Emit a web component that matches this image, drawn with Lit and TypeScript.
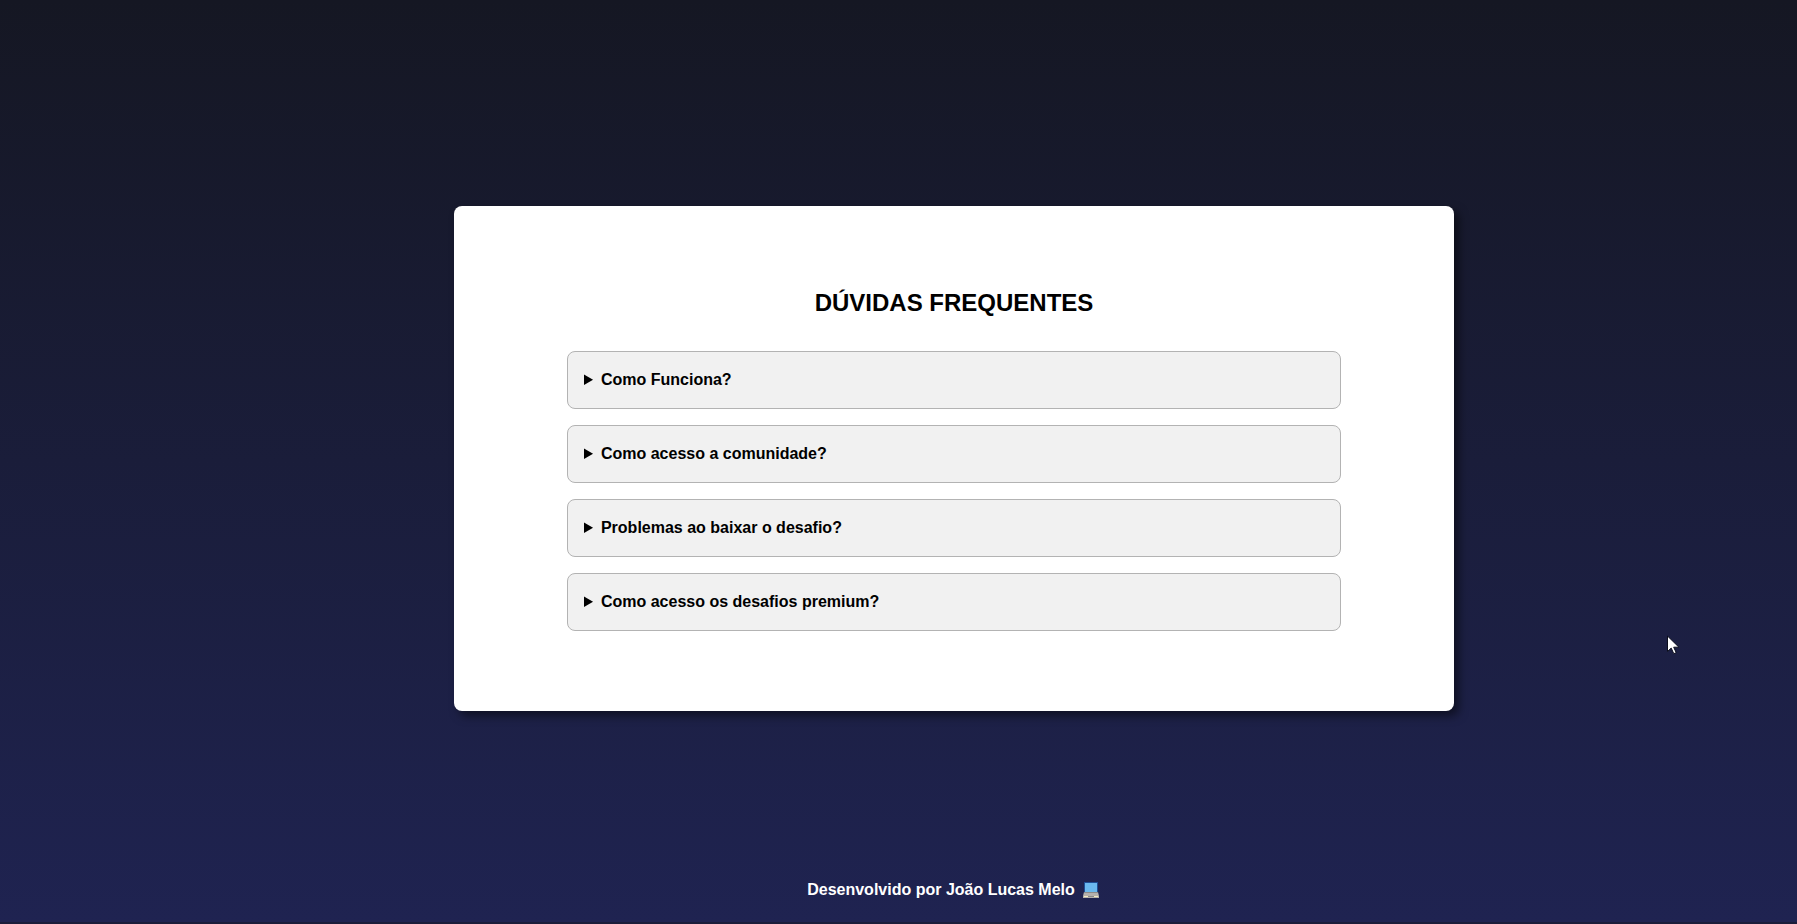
import { LitElement, html, css } from "lit";
import { customElement } from "lit/decorators.js";

const QUESTIONS = [
  { q: "Como Funciona?", a: "Escolha um desafio, baixe os arquivos e comece a praticar." },
  { q: "Como acesso a comunidade?", a: "O convite fica disponível na página inicial." },
  { q: "Problemas ao baixar o desafio?", a: "Tente novamente em outro navegador." },
  { q: "Como acesso os desafios premium?", a: "Assine o plano premium para liberar o acesso." },
];

@customElement("app-root")
export class AppRoot extends LitElement {
  static styles = css`
    :host {
      display: block;
      font-family: "Liberation Sans", Arial, sans-serif;
      font-size: 16px;
      font-weight: bold;
    }
    * {
      box-sizing: border-box;
    }
    .page {
      display: flex;
      flex-direction: column;
      min-height: 100vh;
      padding-left: 111px;
      border-bottom: 2px solid #1b1d3a;
      background: linear-gradient(to bottom, #151723, #1f2351);
    }
    main {
      flex: 1;
      display: flex;
      align-items: center;
      justify-content: center;
      padding-top: 59px;
    }
    .card {
      display: flex;
      flex-direction: column;
      gap: 32px;
      width: 100%;
      max-width: 1000px;
      padding: 80px 113px;
      background: #fff;
      border-radius: 8px;
      box-shadow: 5px 5px 10px rgba(0, 0, 0, 0.5);
    }
    h1 {
      margin: 0;
      font-size: 24px;
      line-height: 33px;
      text-align: center;
    }
    .list {
      display: flex;
      flex-direction: column;
      gap: 16px;
    }
    details {
      border: 1px solid #b3b3b3;
      border-radius: 8px;
      background: #f1f1f1;
    }
    summary {
      padding: 19px 16px;
      line-height: 18px;
      cursor: pointer;
    }
    .answer {
      margin: 0;
      padding: 0 16px 19px;
      font-weight: normal;
    }
    footer {
      display: flex;
      align-items: center;
      justify-content: center;
      gap: 8px;
      padding: 23px 2px 23px 0;
      line-height: 18px;
      color: #fff;
    }
    .pointer {
      position: absolute;
      left: 1667px;
      top: 635px;
    }
  `;

  render() {
    return html`
      <div class="page">
        <main>
          <section class="card">
            <h1>DÚVIDAS FREQUENTES</h1>
            <div class="list">
              ${QUESTIONS.map(
                (item) => html`<details>
                  <summary>${item.q}</summary>
                  <p class="answer">${item.a}</p>
                </details>`
              )}
            </div>
          </section>
        </main>
        <footer>
          <span>Desenvolvido por João Lucas Melo</span>
          <svg width="16" height="16" viewBox="0 0 16 16" aria-hidden="true">
            <path d="M1 0h14v10H1z" fill="#1f4e94" />
            <path d="M2 1h12v9H2z" fill="#6bb9ee" />
            <path d="M1 10h14l1 4v2H0v-2z" fill="#b5b1ad" />
            <path d="M1 10h14v1H1z" fill="#8c8a88" />
            <path d="M1 14h4v1H1zM11 14h4v1h-4z" fill="#f5ecc0" />
            <path d="M5 14h6v1H5z" fill="#8c8a88" />
          </svg>
        </footer>
      </div>
      <svg class="pointer" width="13" height="20" viewBox="0 0 13 20" aria-hidden="true">
        <path d="M.5 1v15.500l3.700-3.400 2.600 5.600 2.400-1-2.500-5.500h5.200z" fill="#fff" stroke="#0b0d1c" />
      </svg>
    `;
  }
}
